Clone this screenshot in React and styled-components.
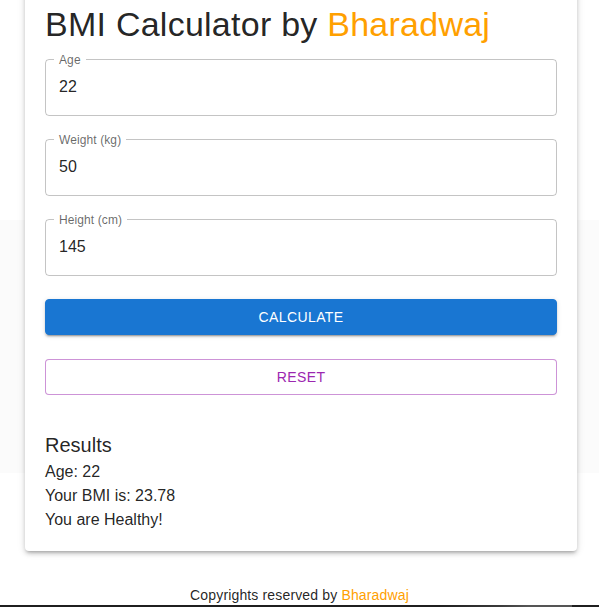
import React from "react";
import styled, { createGlobalStyle } from "styled-components";

const GlobalStyle = createGlobalStyle`
  * {
    box-sizing: border-box;
  }

  html,
  body {
    margin: 0;
    padding: 0;
  }

  body {
    font-family: "Liberation Sans", Arial, sans-serif;
    color: rgba(0, 0, 0, 0.87);
    background: linear-gradient(
      to bottom,
      #fff 0,
      #fff 220px,
      #fbfbfb 220px,
      #fbfbfb 473px,
      #fff 473px
    );
    overflow: hidden;
  }
`;

const Page = styled.div`
  display: flex;
  flex-direction: column;
  min-height: 607px;
`;

const Card = styled.main`
  width: 552px;
  margin: -16px 0 0 25px;
  padding: 20px 20px 19px;
  background: #fff;
  border-radius: 4px;
  box-shadow: 0px 3px 3px -2px rgba(0, 0, 0, 0.2),
    0px 3px 4px 0px rgba(0, 0, 0, 0.14), 0px 1px 8px 0px rgba(0, 0, 0, 0.12);
`;

const Title = styled.h1`
  margin: 0 0 7px;
  font-size: 34px;
  font-weight: 400;
  line-height: 1.235;
  letter-spacing: 0.25px;
`;

const Accent = styled.span`
  color: #ffa000;
`;

const Field = styled.fieldset`
  margin: 0 0 17px;
  padding: 0 8px;
  border: 1px solid rgba(0, 0, 0, 0.23);
  border-radius: 4px;
  min-width: 0;
`;

const Legend = styled.legend`
  padding: 0 5px;
  font-size: 12px;
  line-height: 14px;
  color: rgba(0, 0, 0, 0.6);
  letter-spacing: 0.1px;
`;

const Input = styled.input`
  display: block;
  width: 100%;
  height: 48px;
  margin: 0;
  padding: 0 5px 8px;
  border: 0;
  outline: none;
  background: transparent;
  font-family: inherit;
  font-size: 16px;
  color: rgba(0, 0, 0, 0.87);
`;

const Actions = styled.div`
  display: flex;
  flex-direction: column;
  gap: 24px;
  margin-top: 23px;
`;

const Button = styled.button`
  display: flex;
  align-items: center;
  justify-content: center;
  width: 100%;
  height: 36px;
  padding: 6px 16px;
  border-radius: 4px;
  font-family: inherit;
  font-size: 14px;
  letter-spacing: 0.4px;
  text-transform: uppercase;
  cursor: pointer;
  border: 1px solid
    ${(p) => (p.$variant === "outlined" ? "rgba(156, 39, 176, 0.5)" : "#1976d2")};
  background: ${(p) => (p.$variant === "outlined" ? "#fff" : "#1976d2")};
  color: ${(p) => (p.$variant === "outlined" ? "#9c27b0" : "#fff")};
  box-shadow: ${(p) =>
    p.$variant === "outlined"
      ? "none"
      : "0px 3px 1px -2px rgba(0,0,0,0.2), 0px 2px 2px 0px rgba(0,0,0,0.14), 0px 1px 5px 0px rgba(0,0,0,0.12)"};
`;

const Results = styled.section`
  margin-top: 35px;
`;

const ResultsTitle = styled.h2`
  margin: 0;
  font-size: 20px;
  font-weight: 400;
  line-height: 30px;
`;

const Line = styled.p`
  margin: 0;
  font-size: 16px;
  line-height: 24px;
`;

const Footer = styled.footer`
  margin-top: 34px;
  text-align: center;
  font-size: 14px;
  line-height: 20px;
  letter-spacing: 0.15px;
`;

const TaskBar = styled.div`
  margin-top: auto;
  height: 3px;
  background: linear-gradient(
    to right,
    #1f1f1f 0,
    #1f1f1f 440px,
    #3a3a3a 500px,
    #555 528px,
    #555 572px,
    #1f1f1f 572px
  );
`;

const fields = [
  { label: "Age", value: "22" },
  { label: "Weight (kg)", value: "50" },
  { label: "Height (cm)", value: "145" },
];

const App = () => {
  return (
    <>
      <GlobalStyle />
      <Page>
        <Card>
          <Title>
            BMI Calculator by <Accent>Bharadwaj</Accent>
          </Title>

          {fields.map((f) => (
            <Field key={f.label}>
              <Legend>{f.label}</Legend>
              <Input type="text" defaultValue={f.value} />
            </Field>
          ))}

          <Actions>
            <Button type="button">Calculate</Button>
            <Button type="button" $variant="outlined">
              Reset
            </Button>
          </Actions>

          <Results>
            <ResultsTitle>Results</ResultsTitle>
            <Line>Age: 22</Line>
            <Line>Your BMI is: 23.78</Line>
            <Line>You are Healthy!</Line>
          </Results>
        </Card>

        <Footer>
          Copyrights reserved by <Accent>Bharadwaj</Accent>
        </Footer>
        <TaskBar />
      </Page>
    </>
  );
};

export default App;
